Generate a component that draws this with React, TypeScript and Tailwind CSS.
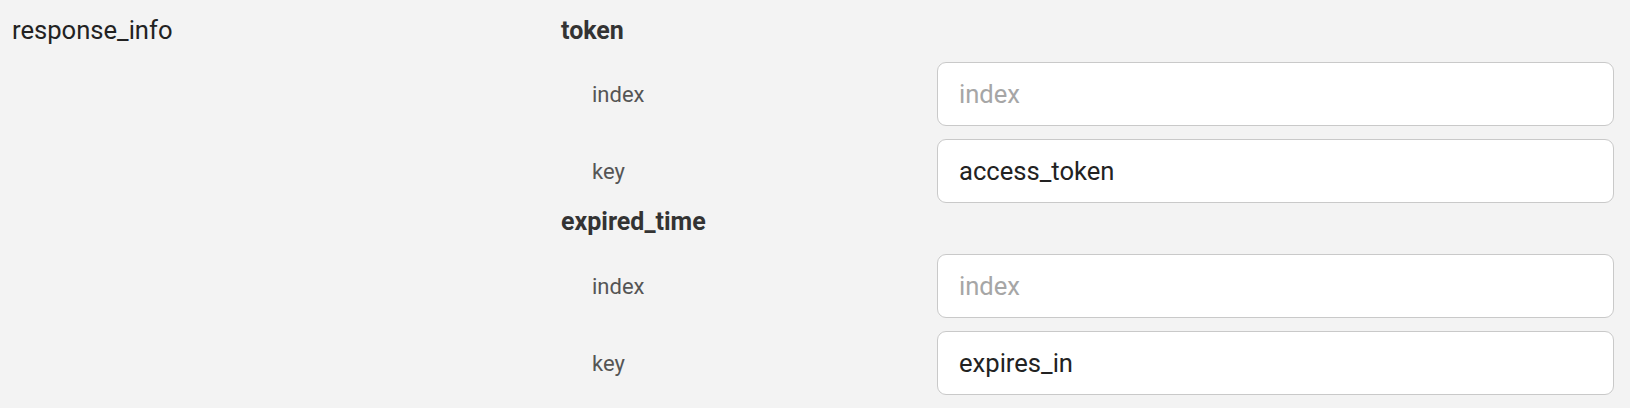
import React from "react";

const font = { fontFamily: "Roboto, 'Noto Sans', sans-serif" };

function Row({ label, value, placeholder }: { label: string; value?: string; placeholder: string }) {
  return (
    <div className="flex items-center mt-[13px] h-[64px]">
      <div className="w-[376px] pl-[31px] text-[22px] text-[#555555]">{label}</div>
      <input
        readOnly
        value={value ?? ""}
        placeholder={placeholder}
        className="flex-1 h-[64px] rounded-[9px] border border-[#c9c9c9] bg-white pl-[21px] text-[25.6px] text-[#222222] placeholder:text-[#a6a6a6] outline-none"
        style={font}
      />
    </div>
  );
}

export default function App() {
  return (
    <div className="w-[1630px] h-[408px] bg-[#f3f3f3] flex pl-[12px] pr-[16px] pt-[12px]" style={font}>
      <div className="w-[549px] h-[37px] leading-[37px] text-[25.6px] text-[#222222]">response_info</div>
      <div className="flex-1 flex flex-col">
        <div className="h-[37px] leading-[37px] text-[25px] font-bold text-[#333333]">token</div>
        <Row label="index" placeholder="index" />
        <Row label="key" value="access_token" placeholder="key" />
        <div className="h-[38px] leading-[38px] text-[25px] font-bold text-[#333333]">expired_time</div>
        <Row label="index" placeholder="index" />
        <Row label="key" value="expires_in" placeholder="key" />
      </div>
    </div>
  );
}
